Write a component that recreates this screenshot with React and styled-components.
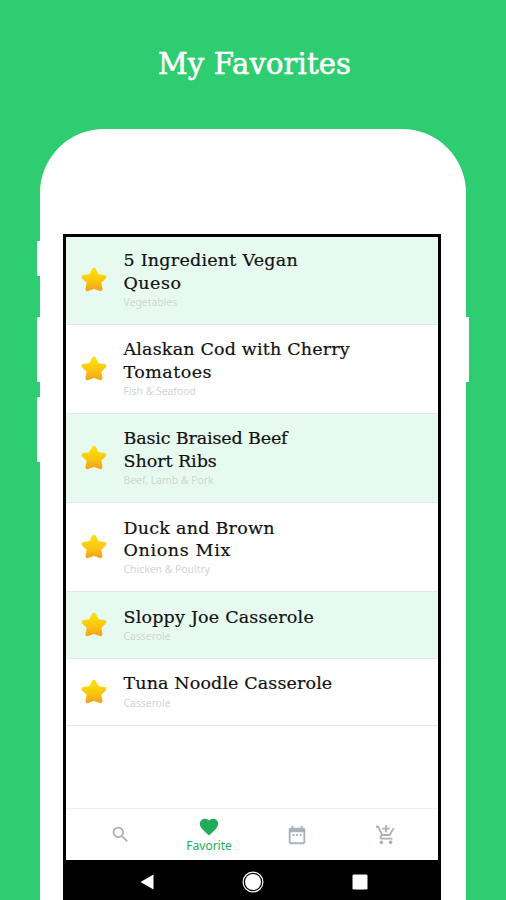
import styled, { createGlobalStyle } from 'styled-components';
import {
	MdAddShoppingCart,
	MdDateRange,
	MdFavorite,
	MdSearch,
} from 'react-icons/md';

const recipes = [
	{
		lines: [
			{ text: '5 Ingredient Vegan', track: 0.24 },
			{ text: 'Queso', track: 0.5 },
		],
		category: 'Vegetables',
	},
	{
		lines: [
			{ text: 'Alaskan Cod with Cherry', track: 0.18 },
			{ text: 'Tomatoes', track: 0.45 },
		],
		category: 'Fish & Seafood',
	},
	{
		lines: [
			{ text: 'Basic Braised Beef', track: -0.15 },
			{ text: 'Short Ribs', track: -0.05 },
		],
		category: 'Beef, Lamb & Pork',
	},
	{
		lines: [
			{ text: 'Duck and Brown', track: 0.25 },
			{ text: 'Onions Mix', track: 0.65 },
		],
		category: 'Chicken & Poultry',
	},
	{
		lines: [{ text: 'Sloppy Joe Casserole', track: 0.2 }],
		category: 'Casserole',
	},
	{
		lines: [{ text: 'Tuna Noodle Casserole', track: 0.12 }],
		category: 'Casserole',
	},
];

const tabs = [
	{ name: 'Search', icon: MdSearch, size: 21 },
	{ name: 'Favorite', icon: MdFavorite, size: 22, active: true },
	{ name: 'Calendar', icon: MdDateRange, size: 22 },
	{ name: 'Shopping', icon: MdAddShoppingCart, size: 22 },
];

function Star() {
	return (
		<svg width='28' height='28' viewBox='0 0 28 28'>
			<defs>
				<linearGradient id='gold' x1='0' y1='0' x2='0' y2='1'>
					<stop offset='0.1' stopColor='#fbdc0c' />
					<stop offset='0.6' stopColor='#fac40f' />
					<stop offset='1' stopColor='#f2a81c' />
				</linearGradient>
			</defs>
			<path
				d='M14 3.8 L17.3 10 L24.4 11 L19.2 16.2 L20.5 23.2 L14 20.8 L7.5 23.2 L8.8 16.2 L3.6 11 L10.7 10 Z'
				fill='url(#gold)'
				stroke='url(#gold)'
				strokeWidth='4'
				strokeLinejoin='round'
			/>
		</svg>
	);
}

function App() {
	return (
		<Page>
			<GlobalStyle />
			<Title>My Favorites</Title>
			<Phone>
				<SideButton $side='left' $top={112} $height={35} />
				<SideButton $side='left' $top={188} $height={65} />
				<SideButton $side='left' $top={268} $height={65} />
				<SideButton $side='right' $top={188} $height={65} />
				<Screen>
					<List>
						{recipes.map((recipe, i) => (
							<Row key={i} $tinted={i % 2 === 0} $first={i === 0}>
								<Star />
								<div>
									{recipe.lines.map((line) => (
										<Name key={line.text}>
											<Tracked $track={line.track}>{line.text}</Tracked>
										</Name>
									))}
									<Category>{recipe.category}</Category>
								</div>
							</Row>
						))}
					</List>
					<TabBar>
						{tabs.map(({ name, icon: Icon, size, active }) => (
							<Tab key={name} $active={active} aria-label={name}>
								<Icon size={size} />
								{active && <span>{name}</span>}
							</Tab>
						))}
					</TabBar>
					<SystemBar>
						<svg width='16' height='18' viewBox='0 0 16 18'>
							<path d='M1.5 9 L14.5 1.5 V16.5 Z' fill='#fff' />
						</svg>
						<svg width='24' height='24' viewBox='0 0 24 24'>
							<circle cx='12' cy='12' r='8' fill='#fff' />
							<circle
								cx='12'
								cy='12'
								r='9.9'
								fill='none'
								stroke='#fff'
								strokeWidth='1.2'
							/>
						</svg>
						<svg width='16' height='16' viewBox='0 0 16 16'>
							<rect x='0.5' y='0.5' width='15' height='15' rx='1.3' fill='#fff' />
						</svg>
					</SystemBar>
				</Screen>
			</Phone>
		</Page>
	);
}

export default App;

const GlobalStyle = createGlobalStyle`
	* {
		box-sizing: border-box;
	}
	body {
		margin: 0;
	}
	svg {
		display: block;
		flex: none;
	}
`;

const slab = `'DejaVu Serif', serif`;

const Page = styled.div`
	display: flex;
	flex-direction: column;
	align-items: center;
	width: 506px;
	height: 900px;
	overflow: hidden;
	background-color: #2fcd71;
`;

const Title = styled.h1`
	flex: none;
	height: 129px;
	margin: 0;
	padding: 46px 0 0 3px;
	font: 400 29px/36px ${slab};
	letter-spacing: 0.15px;
	-webkit-text-stroke: 0.6px #fff;
	color: #fff;
	white-space: nowrap;
`;

const Phone = styled.div`
	position: relative;
	flex: none;
	width: 426px;
	height: 771px;
	padding: 105px 25px 0 22.5px;
	border-radius: 64px 64px 0 0;
	background-color: #fff;
`;

const SideButton = styled.div`
	position: absolute;
	${({ $side }) => $side}: -3px;
	top: ${({ $top }) => $top}px;
	width: 6px;
	height: ${({ $height }) => $height}px;
	background-color: #fff;
`;

const Screen = styled.div`
	display: flex;
	flex-direction: column;
	height: 666px;
	border: solid #000;
	border-width: 3.5px 3.5px 0;
	background-color: #fff;
`;

const List = styled.div`
	flex: 1;
`;

const Row = styled.div`
	display: flex;
	align-items: center;
	padding: ${({ $first }) => ($first ? '12.3px' : '13.5px')} 14px 12.5px;
	border-bottom: 1px solid #e4e8e6;
	background-color: ${({ $tinted }) => ($tinted ? '#e7faf0' : '#fff')};

	svg {
		margin: 0 16px 0.5px 0;
	}
`;

const Name = styled.div`
	height: 22.3px;
	font: 400 17.5px/22.3px ${slab};
	-webkit-text-stroke: 0.2px #111;
	color: #111;
	white-space: nowrap;
`;

const Tracked = styled.span`
	letter-spacing: ${({ $track }) => $track}px;
`;

const Category = styled.div`
	height: 17.5px;
	font: 400 10.4px/17.5px 'Noto Sans', sans-serif;
	color: #d0d6d3;
`;

const TabBar = styled.div`
	display: grid;
	grid-template-columns: repeat(4, 1fr);
	flex: none;
	height: 52px;
	padding: 0 8px 0 11px;
	border-top: 1px solid #eee;
`;

const Tab = styled.div`
	display: flex;
	flex-direction: column;
	align-items: center;
	justify-content: center;
	font: 400 12px/16px 'Noto Sans', sans-serif;
	color: ${({ $active }) => ($active ? '#20ac58' : '#a9b2b6')};
`;

const SystemBar = styled.div`
	display: flex;
	align-items: center;
	justify-content: space-between;
	flex: none;
	height: 40px;
	padding: 4px 70px 0 73px;
	background-color: #000;
`;
